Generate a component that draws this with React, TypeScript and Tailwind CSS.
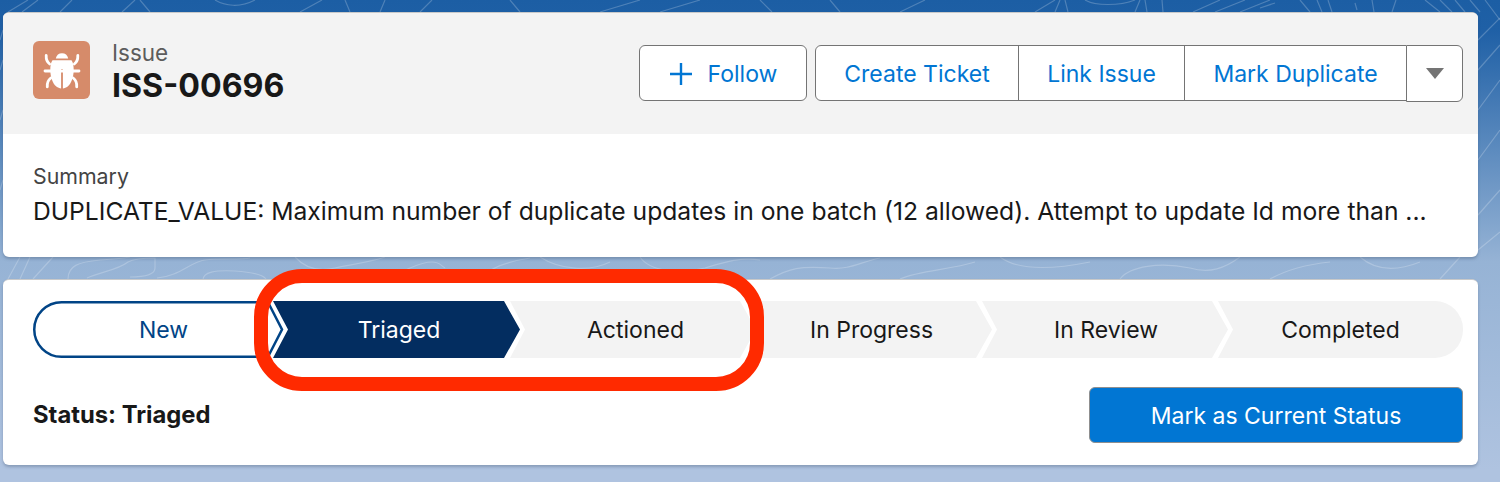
import React from "react";

const stageClip =
  "[clip-path:polygon(0_0,calc(100%-16px)_0,100%_50%,calc(100%-16px)_100%,0_100%,15px_50%)]";

function Bug() {
  return (
    <svg viewBox="0 0 57 58" className="h-[58px] w-[57px]" aria-hidden="true">
      <path d="M22.800 17.500c.7-3.300 3-5.200 6.200-5.200s5.500 1.900 6.200 5.200z" fill="#fff" />
      <path d="M19.500 19.300h19c1.800 2.500 2.200 6 2.200 9.700 0 7-2.400 13.500-6 16.500-1.500 1.200-3.300 1.800-4.800 2V28h-1.800v19.500c-1.500-.2-3.300-.8-4.800-2-3.600-3-6-9.500-6-16.500 0-3.700.4-7.200 2.200-9.700z" fill="#fff" />
      <g fill="none" stroke="#fff" strokeWidth="2.800" strokeLinecap="round">
        <path d="M13.200 14.500c-.2 3.800.8 6.500 3.500 8.500" />
        <path d="M44.800 14.500c.2 3.800-.8 6.500-3.500 8.500" />
        <path d="M12 30h34" />
        <path d="M14.300 45.800c-.3-3.800.8-6.800 3.500-8.800" />
        <path d="M43.700 45.800c.3-3.800-.8-6.800-3.500-8.800" />
      </g>
    </svg>
  );
}

function Contours() {
  return (
    <svg className="absolute inset-0 h-full w-full" viewBox="0 0 1500 482" preserveAspectRatio="none" aria-hidden="true">
      <g fill="none" stroke="#ffffff" strokeOpacity="0.22" strokeWidth="1.200">
        <path d="M8 12 28 0M22 12 38 0M60 12 72 0M122 12 135 0M140 0 150 12M215 0C225 6 240 8 255 0M300 12 322 0M345 0 350 12M385 0 380 12M420 12 432 0M510 0 520 12M600 12 640 0M660 12 700 0M760 0 772 12M830 0 840 12M900 12 925 0" />
        <path d="M1035 12 1055 0M1055 12 1060 0M1065 0 1068 12M1085 0C1095 6 1120 6 1135 0M1135 12 1140 0M1145 0 1147 12M1162 0 1163 12M1193 12 1220 0M1215 12 1245 0M1240 12 1270 0M1260 8 1275 3M1300 0 1310 12M1317 0 1322 12M1328 0 1332 12M1355 3 1357 10M1372 0 1374 12M1392 12 1396 0M1425 0 1440 12M1440 0 1452 12M1455 0 1465 12M1470 0 1480 12M1485 0 1500 20" />
        <path d="M0 40 3 30M0 70 3 60M0 120 3 110M0 190 3 180M1478 40 1500 18M1478 70 1500 45M1478 110 1500 80M1478 160 1500 130M1478 215 1500 190M1478 250 1500 232" />
        <path d="M8 279 20 257M20 279 30 257M33 279 53 257M68 279C68 266 78 262 100 260 115 259 125 258 130 257M87 278C100 272 118 270 128 262 135 258 150 258 155 258V268C155 275 145 277 130 277M157 278C180 276 190 262 205 260 220 258 240 260 250 258M203 280C203 272 215 270 235 271 250 272 262 274 266 279M295 257C305 268 318 272 335 268 355 264 370 262 385 257M392 272C405 274 415 262 432 262 440 262 440 265 445 268M480 279C490 268 505 262 530 258M540 257C560 270 590 272 610 262M640 257C650 272 680 274 705 268 725 262 740 257 760 260M770 279C790 268 800 266 830 268 850 270 860 262 880 258M900 279C920 270 950 270 975 262M1000 257C1020 272 1060 268 1090 262M1120 279C1130 266 1160 262 1190 268 1210 274 1225 268 1240 257M1270 279C1290 268 1310 264 1330 262M1360 257C1375 270 1395 272 1420 262M1440 279 1460 257" />
      </g>
    </svg>
  );
}

export default function App() {
  return (
    <div className="relative h-[482px] w-[1500px] overflow-hidden bg-[linear-gradient(to_bottom,#1c5ea4_0px,#1f60a6_30px,#96b3d5_262px,#afc3e0_470px,#afc3e0_100%)] pt-3 pl-[3px] font-['Inter','Liberation_Sans',sans-serif]">
      <Contours />

      <section className="relative h-[245px] w-[1475px] overflow-hidden rounded-md border-t border-[#c9c9c9] bg-white shadow-[0_2px_3px_rgba(60,80,110,0.35)]">
        <header className="flex h-[121px] items-start justify-between bg-[#f3f3f3] pt-[28px] pr-[15px] pl-[30px]">
          <div className="flex items-start gap-[22px]">
            <div className="h-[58px] w-[57px] rounded-md bg-[#d68b6a]">
              <Bug />
            </div>
            <div>
              <div className="text-[22.500px] leading-[24px] text-[#5c5c5c]">Issue</div>
              <div className="mt-[3px] text-[32.200px] leading-[36px] font-bold text-[#181818]">ISS-00696</div>
            </div>
          </div>

          <div className="flex items-start gap-2 pt-[4px] text-[23px] text-[#0176d3]">
            <button className="flex h-[56px] w-[168px] items-center justify-center gap-[15px] rounded-md border border-[#747474] bg-white pt-[2px]">
              <svg viewBox="0 0 24 24" className="h-[24px] w-[24px]" fill="none" stroke="#0176d3" strokeWidth="2.400" aria-hidden="true">
                <path d="M12 1v22M1 12h22" />
              </svg>
              Follow
            </button>
            <div className="flex items-start">
              <button className="h-[56px] w-[204px] rounded-l-md border border-[#747474] bg-white pt-[2px]">Create Ticket</button>
              <button className="-ml-px h-[56px] w-[167px] border border-[#747474] bg-white pt-[2px]">Link Issue</button>
              <button className="-ml-px h-[56px] w-[222px] border-y border-l border-[#747474] bg-white pt-[2px]">Mark Duplicate</button>
              <button className="flex h-[57px] w-[57px] items-center justify-center rounded-r-md rounded-bl-none border border-[#747474] bg-white">
                <svg viewBox="0 0 20 13" className="h-[13px] w-[20px]" aria-hidden="true">
                  <path d="M1 1h18L10 12z" fill="#747474" />
                </svg>
              </button>
            </div>
          </div>
        </header>

        <div className="pt-[28px] pl-[30px] text-[#181818]">
          <div className="text-[21.300px] leading-[28px] text-[#444444]">Summary</div>
          <div className="mt-[5px] text-[24.650px] leading-[32px] whitespace-nowrap">
            DUPLICATE_VALUE: Maximum number of duplicate updates in one batch (12 allowed). Attempt to update Id more than ...
          </div>
        </div>
      </section>

      <section className="relative mt-[22px] h-[186px] w-[1475px] rounded-md border-t border-[#c9c9c9] bg-white pt-[21px] pr-[15px] pl-[30px] shadow-[0_2px_3px_rgba(60,80,110,0.35)]">
        <div className="flex h-[57px] w-[1430px] text-[23px]">
          <div className="relative flex h-full w-[251px] shrink-0 items-center justify-center pt-[1px] pl-[10px] text-[#014486]">
            <svg viewBox="0 0 251 57" className="absolute inset-0 h-full w-full" fill="none" aria-hidden="true">
              <path d="M235 1.250H28.500a27.250 27.250 0 0 0 0 54.500H235L249 28.500z" stroke="#014486" strokeWidth="2.500" />
            </svg>
            <span className="relative">New</span>
          </div>
          <div className={`-ml-[11px] flex h-full w-[247px] shrink-0 items-center justify-center bg-[#032d60] pt-[2px] pl-[5px] text-white ${stageClip}`}>Triaged</div>
          <div className={`-ml-[10px] flex h-full w-[246px] shrink-0 items-center justify-center bg-[#f3f3f3] pt-[2px] pl-[5px] text-[#181818] ${stageClip}`}>Actioned</div>
          <div className={`-ml-[10px] flex h-full w-[246px] shrink-0 items-center justify-center bg-[#f3f3f3] pt-[2px] pl-[5px] text-[#181818] ${stageClip}`}>In Progress</div>
          <div className={`-ml-[10px] flex h-full w-[246px] shrink-0 items-center justify-center bg-[#f3f3f3] pt-[2px] pl-[2px] text-[#181818] ${stageClip}`}>In Review</div>
          <div className="-ml-[10px] flex h-full min-w-0 flex-1 items-center justify-center rounded-r-[28px] bg-[#f3f3f3] pt-[2px] text-[#181818] [clip-path:polygon(0_0,100%_0,100%_100%,0_100%,15px_50%)]">Completed</div>
        </div>

        <div className="mt-[29px] flex items-center justify-between">
          <div className="text-[23.800px] leading-[30px] font-bold text-[#181818]">Status: Triaged</div>
          <button className="h-[56px] w-[374px] rounded-md border border-[#8f8f8f] bg-[#0176d3] pt-[2px] text-[23px] text-white">Mark as Current Status</button>
        </div>
      </section>

      <div className="absolute top-[269px] left-[254px] h-[122px] w-[510px] rounded-[48px] border-[14px] border-[#ff2a00]" />
    </div>
  );
}
